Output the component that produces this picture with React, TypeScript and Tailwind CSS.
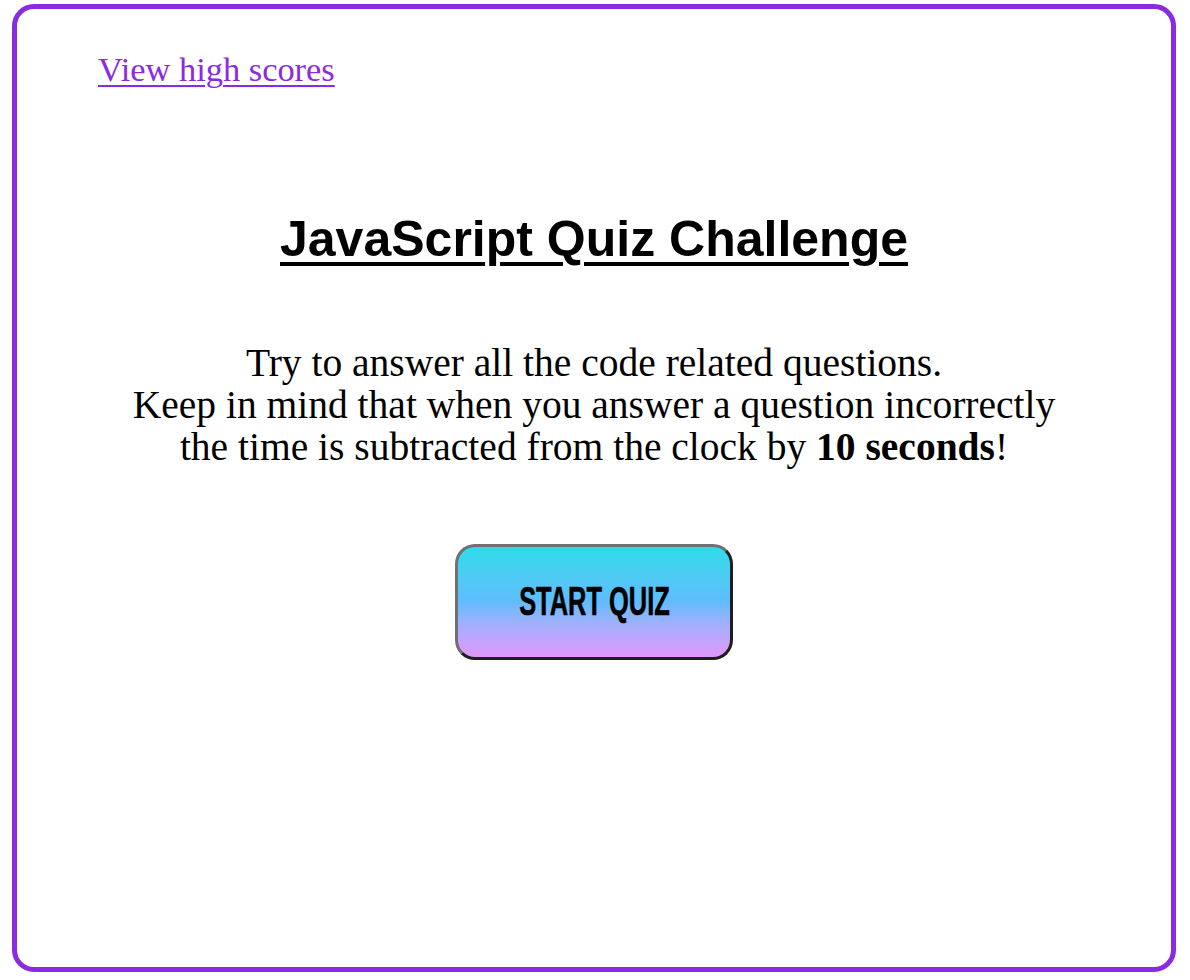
export default function App() {
  return (
    <div className="w-[1190px] h-[980px] bg-white pl-[12px] pt-[4px]">
      <div className="w-[1164px] h-[968px] rounded-[22px] border-[5px] border-[#8a2be2] bg-white">
        <div className="pl-[81px] pt-[40px]">
          <a
            href="#"
            className="text-[34.4px] leading-[40px] text-[#8a2be2] underline decoration-[2px] underline-offset-[4px] [font-family:'Liberation_Serif',serif]"
          >
            View high scores
          </a>
        </div>
        <h1 className="mt-[122px] text-center text-[50px] leading-[56px] font-bold underline decoration-[3.5px] underline-offset-[6px] text-black [font-family:'Liberation_Sans',Arial,sans-serif]">
          JavaScript Quiz Challenge
        </h1>
        <p className="mt-[75px] text-center text-[39.5px] leading-[42px] text-black [font-family:'Liberation_Serif',serif]">
          Try to answer all the code related questions.
          <br />
          Keep in mind that when you answer a question incorrectly
          <br />
          the time is subtracted from the clock by <strong>10 seconds</strong>!
        </p>
        <div className="mt-[76px] flex justify-center">
          <button className="w-[278px] h-[116px] rounded-[20px] border-[3px] border-t-[#707070] border-l-[#707070] border-r-[#1e1e1e] border-b-[#1e1e1e] bg-gradient-to-b from-[#2adce9] via-[#5fbcfd] to-[#e097fb] flex items-center justify-center">
            <span className="inline-block scale-x-[0.62] text-[41px] font-bold text-black uppercase [font-family:'Liberation_Sans',sans-serif] [-webkit-text-stroke:0.6px_black]">
              Start Quiz
            </span>
          </button>
        </div>
      </div>
    </div>
  );
}
